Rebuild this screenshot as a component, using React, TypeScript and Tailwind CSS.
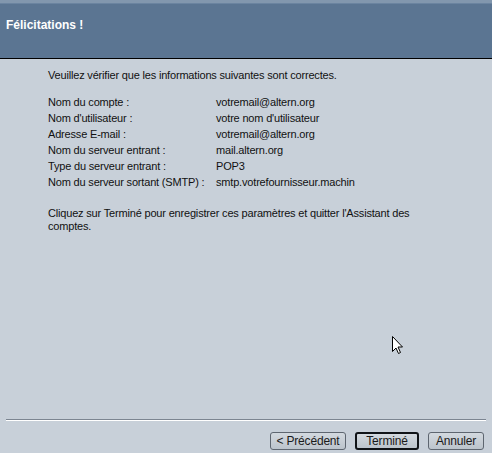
import React from "react"

const rows: Array<[string, string]> = [
  ["Nom du compte :", "votremail@altern.org"],
  ["Nom d'utilisateur :", "votre nom d'utilisateur"],
  ["Adresse E-mail :", "votremail@altern.org"],
  ["Nom du serveur entrant :", "mail.altern.org"],
  ["Type du serveur entrant :", "POP3"],
  ["Nom du serveur sortant (SMTP) :", "smtp.votrefournisseur.machin"],
]

function WizardButton({ label, primary, width }: { label: string; primary?: boolean; width: string }) {
  return (
    <button
      className={
        "flex h-[18px] items-center justify-center rounded-[3px] bg-gradient-to-b from-[#d3d9df] to-[#bcc4cc] text-[12px] leading-none text-[#1a1a1a] " +
        width +
        (primary ? " border-2 border-[#101418]" : " border border-[#5e6670]")
      }
    >
      {label}
    </button>
  )
}

export default function App() {
  return (
    <div
      className="relative flex h-[453px] w-[492px] flex-col overflow-hidden bg-[#c8d0d9] text-[11px] tracking-[-0.18px] text-[#111]"
      style={{ fontFamily: '"Liberation Sans", Arial, sans-serif' }}
    >
      <div className="h-[3px] bg-[#8297ae]" />
      <div className="h-[1px] bg-[#6b84a0]" />
      <div className="h-[55px] border-b border-black bg-[#5b7592] px-[6px] pt-[12px]">
        <h1 className="text-[12px] font-bold tracking-normal text-white">Félicitations !</h1>
      </div>

      <div className="flex flex-1 flex-col pl-[48px] pt-[10px]">
        <p className="leading-[13px]">Veuillez vérifier que les informations suivantes sont correctes.</p>
        <div className="mt-[12px] flex flex-col">
          {rows.map(([k, v]) => (
            <div key={k} className="flex h-[16px] items-center">
              <span className="w-[168px]">{k}</span>
              <span>{v}</span>
            </div>
          ))}
        </div>
        <p className="mt-[17px] w-[385px] leading-[13px]">
          Cliquez sur Terminé pour enregistrer ces paramètres et quitter l'Assistant des comptes.
        </p>
      </div>

      <div className="mx-[6px] border-t border-b border-t-[#7c8591] border-b-white" />
      <div className="flex h-[32px] items-start justify-end gap-[9px] pr-[8px] pt-[11px]">
        <WizardButton label="< Précédent" width="w-[76px]" />
        <WizardButton label="Terminé" primary width="w-[64px]" />
        <WizardButton label="Annuler" width="w-[56px]" />
      </div>

      <svg className="absolute left-[392px] top-[336px]" width="12" height="19" viewBox="0 0 12 19">
        <path d="M0.5 0.5 L0.5 15.5 L4 12 L6.5 17.5 L8.5 16.5 L6 11 L10.5 11 Z" fill="white" stroke="black" strokeWidth="1" />
      </svg>
    </div>
  )
}
